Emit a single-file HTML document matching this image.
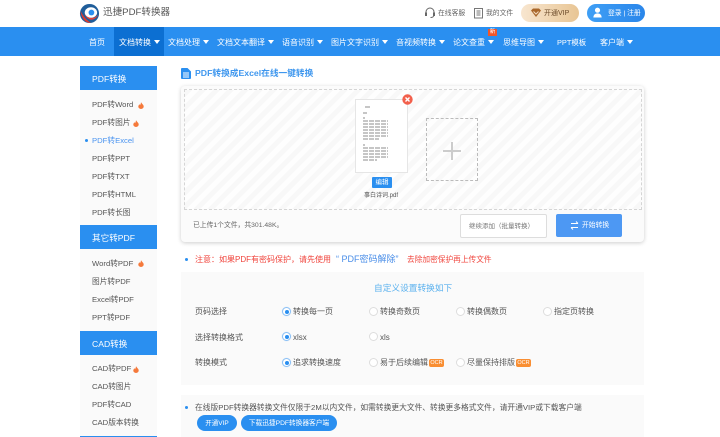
<!DOCTYPE html>
<html lang="zh"><head><meta charset="utf-8"><style>
html,body{margin:0;padding:0;background:#fff}
body{width:720px;height:437px;overflow:hidden;position:relative;font-family:"Liberation Sans","Noto Sans CJK SC",sans-serif;color:#555}
#w{position:absolute;left:0;top:0;width:720px;height:437px;overflow:hidden;filter:blur(.3px)}
.a,.t{position:absolute}
.t{white-space:nowrap;line-height:12px}
.n{color:#fff;font-size:8px;top:37px}
.n i{display:inline-block;width:0;height:0;border:3.500px solid transparent;border-top:4px solid #fff;border-bottom:0;margin-left:3px;vertical-align:1px}
.h{position:absolute;left:80px;width:77px;height:24px;background:#2a8ff0;color:#fff;font-size:8.600px;line-height:26px;text-indent:12px;overflow:hidden}
.g{position:absolute;left:80px;width:77px;background:#fafafa}
.s{font-size:7.700px;left:92px;color:#555}
.f{position:absolute}
.l{font-size:8px;color:#555}
.r{position:absolute;width:7px;height:7px;border:1px solid #ddd;border-radius:50%;background:#fff}
.r.on{border-color:#8cc0f5;box-shadow:0 0 1px #bcdcfa}
.r.on:after{content:"";position:absolute;left:1.500px;top:1.500px;width:4px;height:4px;border-radius:50%;background:#2a8ff0}
.o{position:absolute;width:15px;height:8px;background:#f98e32;border-radius:2px;color:#fff;font-size:5.500px;line-height:8px;text-align:center}
</style></head><body><div id="w">

<svg class="a" style="left:79px;top:3px" width="21" height="21" viewBox="0 0 21 22"><circle cx="10.500" cy="11" r="10" fill="#1f5d9a"/><path d="M1 8C2 16 6 21 12 21 6 17 3 12 1 8Z" fill="#d93a32"/><ellipse cx="12" cy="10" rx="6.500" ry="5.500" fill="#fff"/><circle cx="12.500" cy="10" r="3" fill="#2a8ff0"/><path d="M5 11C9 17 15 17 20 12 16 19 9 20 5 11Z" fill="#e2423a"/></svg>
<span class="t" style="left:103px;top:6px;font-size:9.600px;line-height:14px;color:#555">迅捷PDF转换器</span>

<svg class="a" style="left:424px;top:7px" width="12" height="12" viewBox="0 0 12 12" fill="none" stroke="#666" stroke-width="1"><path d="M2 6V5a4 4 0 0 1 8 0v1M10 8c0 1.500-1.500 2.500-3.500 2.500"/><rect x="1.500" y="6" width="1" height="2.500" fill="#666"/><rect x="9.500" y="6" width="1" height="2.500" fill="#666"/></svg>
<span class="t" style="left:438px;top:8px;font-size:6.800px;color:#666">在线客服</span>
<svg class="a" style="left:474px;top:8px" width="10" height="11" viewBox="0 0 10 11" fill="none" stroke="#777" stroke-width="1"><rect x=".5" y=".5" width="8" height="9.500"/><path d="M2.500 3h4M2.500 5h4M2.500 7h4"/></svg>
<span class="t" style="left:486px;top:8px;font-size:6.800px;color:#666">我的文件</span>
<div class="a" style="left:521px;top:4px;width:58px;height:18px;border-radius:9px;background:linear-gradient(90deg,#f8e6d0,#e8c594)"></div>
<svg class="a" style="left:531px;top:8px" width="10" height="10" viewBox="0 0 10 10"><path d="M0 2.500 2 .5h6l2 2-5 6.500Z" fill="#a9672b"/><path d="M2.500 3.500 5 6l2.500-2.500" stroke="#f3dcc0" fill="none"/></svg>
<span class="t" style="left:544px;top:8px;font-size:7px;color:#6b4a2a">开通VIP</span>
<div class="a" style="left:587px;top:4px;width:58px;height:18px;border-radius:9px;background:linear-gradient(90deg,#3f9ff5,#2a86ea)"></div>
<svg class="a" style="left:592px;top:7px" width="11" height="11" viewBox="0 0 12 11" fill="#fff"><circle cx="6" cy="3" r="2.800"/><path d="M1.500 11c0-3 2-4.500 4.500-4.500s4.500 1.500 4.500 4.500Z"/></svg>
<span class="t" style="left:608px;top:8px;font-size:6.800px;color:#fff">登录 | 注册</span>

<div class="a" style="left:0;top:27px;width:720px;height:29px;background:#2a8ff0"></div>
<div class="a" style="left:114px;top:27px;width:50px;height:29px;background:#0c6fd2"></div>
<span class="t n" style="left:89px">首页</span>
<span class="t n" style="left:119px">文档转换<i></i></span>
<span class="t n" style="left:168px">文档处理<i></i></span>
<span class="t n" style="left:217px">文档文本翻译<i></i></span>
<span class="t n" style="left:282px">语音识别<i></i></span>
<span class="t n" style="left:331px">图片文字识别<i></i></span>
<span class="t n" style="left:396px">音视频转换<i></i></span>
<span class="t n" style="left:453px">论文查重<i></i></span>
<span class="t n" style="left:503px">思维导图<i></i></span>
<span class="t n" style="left:557px;font-size:7.400px">PPT模板</span>
<span class="t n" style="left:600px">客户端<i></i></span>
<div class="a" style="left:488px;top:29px;width:9px;height:7px;background:#f0562a;color:#fff;font-size:5.500px;line-height:7px;text-align:center">新</div>

<div class="g" style="top:90px;height:135px"></div>
<div class="g" style="top:249px;height:82px"></div>
<div class="g" style="top:355px;height:82px"></div>
<div class="h" style="top:66px">PDF转换</div>
<div class="h" style="top:225px">其它转PDF</div>
<div class="h" style="top:331px">CAD转换</div>
<div class="a" style="left:80px;top:436px;width:77px;height:1px;background:#2a8ff0"></div>

<span class="t s" style="top:99px">PDF转Word</span>
<svg class="f" style="left:138px;top:102px" width="6" height="7" viewBox="0 0 6 7"><path d="M3 0c.3 1.500 2.700 2.500 2.700 4.500A2.700 2.500 0 0 1 .3 4.500C.3 3.500 1 3 1.300 2.200 1.700 2.500 2 2.800 2 3.200 2.600 2.400 3 1.200 3 0Z" fill="#f5793b"/></svg>
<span class="t s" style="top:117px">PDF转图片</span>
<svg class="f" style="left:133px;top:120px" width="6" height="7" viewBox="0 0 6 7"><path d="M3 0c.3 1.500 2.700 2.500 2.700 4.500A2.700 2.500 0 0 1 .3 4.500C.3 3.500 1 3 1.300 2.200 1.700 2.500 2 2.800 2 3.200 2.600 2.400 3 1.200 3 0Z" fill="#f5793b"/></svg>
<div class="a" style="left:85px;top:139px;width:3px;height:3px;border-radius:50%;background:#2a8ff0"></div>
<span class="t s" style="top:135px;color:#4a94f0">PDF转Excel</span>
<span class="t s" style="top:153px">PDF转PPT</span>
<span class="t s" style="top:171px">PDF转TXT</span>
<span class="t s" style="top:189px">PDF转HTML</span>
<span class="t s" style="top:207px">PDF转长图</span>
<span class="t s" style="top:258px">Word转PDF</span>
<svg class="f" style="left:138px;top:260px" width="6" height="7" viewBox="0 0 6 7"><path d="M3 0c.3 1.500 2.700 2.500 2.700 4.500A2.700 2.500 0 0 1 .3 4.500C.3 3.500 1 3 1.300 2.200 1.700 2.500 2 2.800 2 3.200 2.600 2.400 3 1.200 3 0Z" fill="#f5793b"/></svg>
<span class="t s" style="top:276px">图片转PDF</span>
<span class="t s" style="top:294px">Excel转PDF</span>
<span class="t s" style="top:312px">PPT转PDF</span>
<span class="t s" style="top:363px">CAD转PDF</span>
<svg class="f" style="left:133px;top:366px" width="6" height="7" viewBox="0 0 6 7"><path d="M3 0c.3 1.500 2.700 2.500 2.700 4.500A2.700 2.500 0 0 1 .3 4.500C.3 3.500 1 3 1.300 2.200 1.700 2.500 2 2.800 2 3.200 2.600 2.400 3 1.200 3 0Z" fill="#f5793b"/></svg>
<span class="t s" style="top:381px">CAD转图片</span>
<span class="t s" style="top:399px">PDF转CAD</span>
<span class="t s" style="top:417px">CAD版本转换</span>

<svg class="a" style="left:181px;top:68px" width="10" height="11" viewBox="0 0 10 11"><path d="M0 1a1 1 0 0 1 1-1h5.500L10 3.500V10a1 1 0 0 1-1 1H1a1 1 0 0 1-1-1Z" fill="#2a8ff0"/><path d="M2 5h6M2 7h6M2 9h6" stroke="#fff"/></svg>
<span class="t" style="left:195px;top:67px;font-size:8.700px;font-weight:bold;color:#3f97ee">PDF转换成Excel在线一键转换</span>

<div class="a" style="left:181px;top:86px;width:463px;height:156px;background:#fbfbfb;border-radius:4px;box-shadow:0 1px 4px rgba(0,0,0,.2)"></div>
<div class="a" style="left:184px;top:89px;width:456px;height:119px;border:1px dashed #d5d5d5;background:repeating-linear-gradient(135deg,#f8f8f8 0 5px,#fefefe 5px 10px)"></div>

<div class="a" style="left:355px;top:99px;width:51px;height:72px;background:#fff;border:1px solid #e6e6e6"></div>
<svg class="a" style="left:362px;top:104px" width="36" height="62" viewBox="0 0 36 62" stroke="#666" stroke-width="1" stroke-dasharray="5 1" opacity=".75"><path d="M3 3h6M1 9h4M1 14h2M1 17h25M1 20h25M1 23h25M1 26h25M1 29h25M1 32h25M1 35h16M1 41h2M1 44h25M1 47h25M1 50h25M1 53h25M1 56h14"/></svg>
<svg class="a" style="left:402px;top:94px" width="11" height="11" viewBox="0 0 11 11"><circle cx="5.500" cy="5.500" r="5.200" fill="#f2604c"/><path d="M3.500 3.500l4 4M7.500 3.500l-4 4" stroke="#fff" stroke-width="1.400"/></svg>
<div class="a" style="left:426px;top:118px;width:50px;height:61px;border:1px dashed #bbb"></div>
<div class="a" style="left:443px;top:150px;width:18px;height:2px;background:#ccc"></div>
<div class="a" style="left:451px;top:142px;width:2px;height:18px;background:#ccc"></div>
<div class="a" style="left:372px;top:177px;width:20px;height:11px;background:#2a8ff0;border-radius:1px;color:#fff;font-size:6.500px;line-height:11px;text-align:center">编辑</div>
<span class="t" style="left:364px;top:190px;font-size:6px;color:#555">事白诗词.pdf</span>

<span class="t" style="left:193px;top:220px;font-size:6.800px;color:#666">已上传1个文件，共301.48K。</span>
<div class="a" style="left:460px;top:214px;width:85px;height:22px;border:1px solid #ddd;border-radius:2px;background:#fff"></div>
<span class="t" style="left:469px;top:221px;font-size:6.500px;color:#777">继续添加（批量转换）</span>
<div class="a" style="left:556px;top:214px;width:66px;height:23px;border-radius:2px;background:#4d98f3"></div>
<svg class="a" style="left:570px;top:221px" width="9" height="9" viewBox="0 0 9 9" fill="none" stroke="#fff"><path d="M1 2.500h7M6 .5l2 2M8 6.500H1M3 8.500l-2-2"/></svg>
<span class="t" style="left:582px;top:220px;font-size:6.800px;color:#fff">开始转换</span>

<div class="a" style="left:185px;top:258px;width:3px;height:3px;border-radius:50%;background:#2a8ff0"></div>
<span class="t" style="left:195px;top:254px;font-size:8px;color:#f0443c">注意：如果PDF有密码保护，请先使用</span>
<span class="t" style="left:336px;top:253px;font-size:9px;color:#4a8ee8">“ PDF密码解除”</span>
<span class="t" style="left:407px;top:254px;font-size:7.700px;color:#f0443c">去除加密保护再上传文件</span>

<div class="a" style="left:181px;top:272px;width:463px;height:113px;background:#fafafa"></div>
<span class="t" style="left:374px;top:282px;font-size:8.700px;color:#58b0ee">自定义设置转换如下</span>
<span class="t l" style="left:195px;top:306px">页码选择</span>
<span class="t l" style="left:195px;top:332px">选择转换格式</span>
<span class="t l" style="left:195px;top:357px">转换模式</span>

<div class="r on" style="left:282px;top:307px"></div><span class="t l" style="left:293px;top:306px">转换每一页</span>
<div class="r" style="left:369px;top:307px"></div><span class="t l" style="left:380px;top:306px">转换奇数页</span>
<div class="r" style="left:456px;top:307px"></div><span class="t l" style="left:467px;top:306px">转换偶数页</span>
<div class="r" style="left:543px;top:307px"></div><span class="t l" style="left:554px;top:306px">指定页转换</span>

<div class="r on" style="left:282px;top:332px"></div><span class="t l" style="left:293px;top:332px">xlsx</span>
<div class="r" style="left:369px;top:332px"></div><span class="t l" style="left:380px;top:332px">xls</span>

<div class="r on" style="left:282px;top:358px"></div><span class="t l" style="left:293px;top:357px">追求转换速度</span>
<div class="r" style="left:369px;top:358px"></div><span class="t l" style="left:380px;top:357px">易于后续编辑</span><div class="o" style="left:429px;top:359px">OCR</div>
<div class="r" style="left:456px;top:358px"></div><span class="t l" style="left:467px;top:357px">尽量保持排版</span><div class="o" style="left:516px;top:359px">OCR</div>

<div class="a" style="left:181px;top:395px;width:463px;height:42px;background:#fafafa"></div>
<div class="a" style="left:185px;top:406px;width:3px;height:3px;border-radius:50%;background:#2a8ff0"></div>
<span class="t" style="left:195px;top:402px;font-size:7.740px;color:#555">在线版PDF转换器转换文件仅限于2M以内文件，如需转换更大文件、转换更多格式文件，请开通VIP或下载客户端</span>
<div class="a" style="left:197px;top:415px;width:40px;height:16px;border-radius:8px;background:#2a8ff0;color:#fff;font-size:6.500px;line-height:17px;text-align:center">开通VIP</div>
<div class="a" style="left:241px;top:415px;width:96px;height:16px;border-radius:8px;background:#2a8ff0;color:#fff;font-size:6.700px;line-height:17px;text-align:center">下载迅捷PDF转换器客户端</div>
</div></body></html>
